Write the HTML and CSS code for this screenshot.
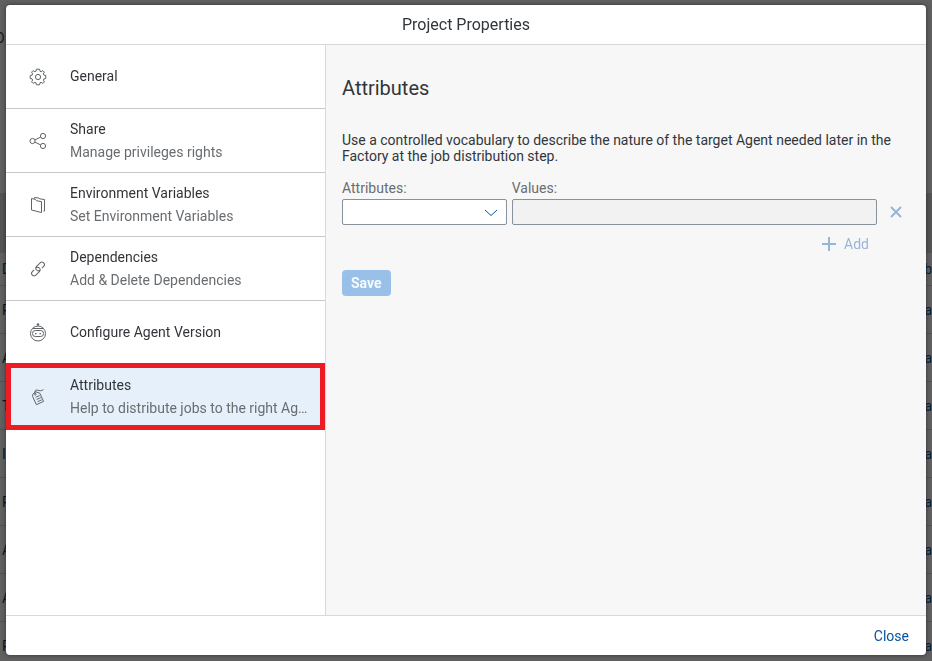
FILE: index.html
```html
<!DOCTYPE html>
<html lang="en">
<head>
<meta charset="utf-8">
<title>Project Properties</title>
<link rel="stylesheet" href="styles.css">
</head>
<body>
<div class="page" aria-hidden="true">
  <div class="page-top"><span>O</span></div>
  <div class="page-band"></div>
  <div class="page-row page-row-head"><span>D</span><span class="end">b</span></div>
  <div class="page-row"><span>P</span><span class="end">a</span></div>
  <div class="page-row"><span>A</span><span class="end">a</span></div>
  <div class="page-row"><span>T</span><span class="end">a</span></div>
  <div class="page-row"><span>I</span><span class="end">a</span></div>
  <div class="page-row"><span>P</span><span class="end">a</span></div>
  <div class="page-row"><span>A</span><span class="end">a</span></div>
  <div class="page-row"><span>A</span><span class="end">a</span></div>
  <div class="page-row"><span>P</span><span class="end">a</span></div>
</div>
<div class="dialog" role="dialog" aria-labelledby="dialog-title">
  <header class="dialog-header"><h1 id="dialog-title">Project Properties</h1></header>
  <div class="dialog-body">
    <nav class="sidebar">
      <a class="item" href="#general">
        <svg class="icon" viewBox="0 0 18 18"><path d="M7.4 1.200h3.200l.4 2 1.100.5 1.800-1.100 1.500 1.500-1 1.800.5 1.200 1.900.4v3l-1.900.4-.5 1.200 1 1.800-1.500 1.500-1.800-1.100-1.100.5-.4 2H7.400l-.4-2-1.100-.5-1.800 1.100-1.500-1.500 1-1.800-.5-1.200-1.900-.4v-3l1.900-.4.5-1.200-1-1.800 1.500-1.500 1.800 1.100L7 3.200z"/><circle cx="9" cy="9" r="2.6"/></svg>
        <span class="item-text"><span class="item-title">General</span></span>
      </a>
      <a class="item" href="#share">
        <svg class="icon" viewBox="0 0 18 18"><circle cx="3.5" cy="9" r="2.6"/><circle cx="14" cy="4" r="2.6"/><circle cx="14" cy="14" r="2.6"/><path d="M5.9 7.9l5.7-2.8M5.900 10.100l5.700 2.800"/></svg>
        <span class="item-text"><span class="item-title">Share</span><span class="item-sub">Manage privileges rights</span></span>
      </a>
      <a class="item" href="#environment">
        <svg class="icon" viewBox="0 0 18 18"><path d="M2.500 2.500l3.800.8 1.200 1.400 5 1v10.800l-10-2.500zM5.500 2.700V1.500l4.400.6 1 .8 4.600.6v11.600h-1"/></svg>
        <span class="item-text"><span class="item-title">Environment Variables</span><span class="item-sub">Set Environment Variables</span></span>
      </a>
      <a class="item" href="#dependencies">
        <svg class="icon" viewBox="0 0 18 18"><g transform="rotate(-45 9 9)"><path d="M10.500 11.200H9.800a2.500 2.500 0 0 1-2.500-2.500 2.500 2.500 0 0 1 2.500-2.500h5a2.500 2.500 0 0 1 0 5h-2.500M7.500 6.800h.7a2.500 2.500 0 0 1 2.500 2.500 2.500 2.500 0 0 1-2.500 2.500h-5a2.500 2.500 0 0 1 0-5h2.500"/></g></svg>
        <span class="item-text"><span class="item-title">Dependencies</span><span class="item-sub">Add &amp; Delete Dependencies</span></span>
      </a>
      <a class="item" href="#agent">
        <svg class="icon" viewBox="0 0 18 18"><circle cx="9" cy="9.500" r="7.500"/><rect x="3.500" y="6.500" width="11" height="6" rx="2.800"/><path d="M4 4.500h10"/><circle class="solid" cx="9" cy=".5" r="1.200"/><path class="solid" d="M6 9h1.500v1.300H6zM10.500 9H12v1.300h-1.500z"/></svg>
        <span class="item-text"><span class="item-title">Configure Agent Version</span></span>
      </a>
      <a class="item selected" href="#attributes" aria-current="page">
        <svg class="icon" viewBox="0 0 18 18"><path d="M3.700 6.300L6.400 3.700l4.400 1.500 3.700 8.200-7.100 3.300-3.700-8.100zM6.400 6c-1.200-2.500-.2-4.300 1.800-3.900 2.200.5 4.200 1.300 6.200-.5M6.600 9.300l4-1.800M7.600 11.500l4.200-1.900M8.600 13.700l4-1.800"/><circle cx="6.300" cy="6.300" r=".8"/></svg>
        <span class="item-text"><span class="item-title">Attributes</span><span class="item-sub">Help to distribute jobs to the right Agents</span></span>
      </a>
    </nav>
    <main class="content">
      <h2>Attributes</h2>
      <p>Use a controlled vocabulary to describe the nature of the target Agent needed later in the Factory at the job distribution step.</p>
      <form>
        <div class="fields">
          <div class="field">
            <label for="attribute">Attributes:</label>
            <div class="select-wrap">
              <select id="attribute"><option></option></select>
              <svg class="chevron" viewBox="0 0 14 8"><path d="M1 1l6 5.500L13 1"/></svg>
            </div>
          </div>
          <div class="field">
            <label for="values">Values:</label>
            <input id="values" type="text" disabled>
          </div>
          <button class="remove" type="button" aria-label="Remove" disabled><svg viewBox="0 0 12 12"><path d="M1 1l10 10M11 1L1 11"/></svg></button>
        </div>
        <div class="add-row"><button class="add" type="button" disabled><svg viewBox="0 0 14 14"><path d="M7 0v14M0 7h14"/></svg>Add</button></div>
        <button class="save" type="submit" disabled>Save</button>
      </form>
    </main>
  </div>
  <footer class="dialog-footer"><button class="close" type="button">Close</button></footer>
</div>
</body>
</html>
```
FILE: styles.css
```css
* { box-sizing: border-box; }

body {
  margin: 0;
  height: 100vh;
  overflow: hidden;
  background: #606060;
  color: #32363a;
  font: 14px/16px Roboto, "Liberation Sans", sans-serif;
}

button, input, select { font: inherit; }

.page { color: #14171a; }
.page-top { height: 193px; padding-top: 30px; background: #606060; }
.page-top span { margin-left: -5px; }
.page-band { height: 60px; background: #545454; }
.page-row {
  display: flex;
  justify-content: space-between;
  align-items: center;
  height: 48px;
  padding-left: 2px;
  border-bottom: 1px solid #525252;
}
.page-row-head { height: 33px; }
.page-row .end { color: #0d2238; }

.dialog {
  position: fixed;
  inset: 5px 6px 6px;
  display: flex;
  flex-direction: column;
  overflow: hidden;
  border-radius: 4px;
  background: #fff;
  box-shadow: 0 0 4px #00000080;
}
.dialog-header {
  display: flex;
  align-items: center;
  justify-content: center;
  height: 40px;
  border-bottom: 1px solid #d9d9d9;
}
h1, h2 { margin: 0; font-weight: 400; }
h1 { font-size: 16px; line-height: 20px; }
.dialog-body { display: flex; flex: 1; min-height: 0; }

.sidebar {
  flex: 0 0 320px;
  min-width: 0;
  border-right: 1px solid #d9d9d9;
}
.item {
  display: flex;
  align-items: center;
  gap: 23px;
  height: 64px;
  padding: 0 16px 0 23px;
  border-bottom: 1px solid #c8c8c8;
  color: #32363a;
  text-decoration: none;
}
.icon {
  flex: none;
  width: 18px;
  height: 18px;
  overflow: visible;
  fill: none;
  stroke: #5f6468;
  stroke-width: 1;
}
.icon .solid { fill: #5f6468; stroke: none; }
.item-text { display: flex; flex-direction: column; min-width: 0; }
.item-title, .item-sub {
  overflow: hidden;
  line-height: 23px;
  text-overflow: ellipsis;
  white-space: nowrap;
}
.item-sub { color: #6a6d70; }
.selected {
  height: 67px;
  margin-top: -2px;
  padding: 0 11px 0 18px;
  border: 5px solid #ed1c24;
  background: #e5f0fa;
}

.content { flex: 1; min-width: 0; padding: 31px 16px; background: #f7f7f7; }
h2 { margin-bottom: 32px; font-size: 20px; line-height: 24px; }
p { margin: 0 0 16px; }
.fields { display: flex; align-items: flex-end; gap: 5px; }
.field { flex: 366 1 0; min-width: 0; }
.field:first-child { flex-grow: 165; }
label { display: block; margin-bottom: 3px; color: #6a6d70; }
.select-wrap { position: relative; }
select, input {
  display: block;
  width: 100%;
  height: 26px;
  padding: 0 8px;
  border: 1px solid #89919a;
  border-radius: 2px;
  background: #fff;
  appearance: none;
}
input:disabled { background: #f2f2f2; }
.chevron {
  position: absolute;
  top: 10px;
  right: 9px;
  width: 14px;
  height: 8px;
  fill: none;
  stroke: #0854a0;
  pointer-events: none;
}
button {
  display: inline-flex;
  align-items: center;
  justify-content: center;
  height: 26px;
  padding: 0;
  border: 0;
  border-radius: 4px;
  background: none;
}
.remove, .add { color: #97b5d6; }
.remove svg, .add svg { fill: none; stroke: currentColor; stroke-width: 2; }
.remove { flex: 0 0 28px; }
.remove svg { width: 12px; height: 12px; }
.add-row { display: flex; justify-content: flex-end; padding: 6px 41px 0 0; }
.add { gap: 8px; }
.add svg { width: 14px; height: 14px; }
.save {
  margin-top: 13px;
  padding: 0 9px;
  background: #99c0e9;
  color: #f7fafd;
  font-weight: 700;
}
.dialog-footer {
  display: flex;
  align-items: center;
  justify-content: flex-end;
  height: 40px;
  padding-right: 17px;
  border-top: 1px solid #d9d9d9;
}
.close { color: #0854a0; }
```
